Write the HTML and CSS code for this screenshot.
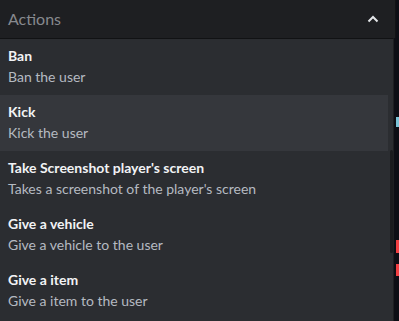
FILE: index.html
```html
<!DOCTYPE html>
<html>
<head>
<meta charset="utf-8">
<link rel="stylesheet" href="styles.css">
</head>
<body>
<div class="page">
  <div class="select">
    <div class="header">
      <span class="placeholder">Actions</span>
      <svg class="chevron" width="12" height="8" viewBox="0 0 12 8"><path d="M1.5 6.5 L6 2 L10.5 6.5" fill="none" stroke="#e3e5e8" stroke-width="2"/></svg>
    </div>
    <div class="menu">
      <div class="options">
        <div class="option"><div class="label">Ban</div><div class="desc">Ban the user</div></div>
        <div class="option hover"><div class="label">Kick</div><div class="desc">Kick the user</div></div>
        <div class="option"><div class="label">Take Screenshot player's screen</div><div class="desc">Takes a screenshot of the player's screen</div></div>
        <div class="option"><div class="label">Give a vehicle</div><div class="desc">Give a vehicle to the user</div></div>
        <div class="option"><div class="label">Give a item</div><div class="desc">Give a item to the user</div></div>
      </div>
      <div class="scrolltrack"><div class="thumb"></div></div>
    </div>
  </div>
  <div class="strip">
    <div class="mark cyan"></div>
    <div class="mark red first"></div>
    <div class="mark red second"></div>
  </div>
</div>
</body>
</html>
```
FILE: styles.css
```css
html, body {
  margin: 0;
  padding: 0;
  background: #0d0e15;
  height: 321px;
  overflow: hidden;
}
.page {
  display: flex;
  height: 321px;
  font-family: Lato, "Noto Sans", sans-serif;
}
.select {
  width: 396px;
  display: flex;
  flex-direction: column;
}
.header {
  height: 38px;
  background: #1e1f22;
  border-right: 1px solid #111214;
  display: flex;
  align-items: center;
  justify-content: space-between;
  padding: 0 16px 0 8px;
  box-sizing: border-box;
}
.placeholder {
  color: #87898e;
  font-size: 16px;
  margin-top: -2px;
}
.chevron {
  display: block;
  margin-top: -1px;
}
.menu {
  flex: 1;
  width: 394px;
  background: #2b2d31;
  border-top: 1px solid #111214;
  border-right: 1px solid #1e1f22;
  box-sizing: border-box;
  display: flex;
}
.options {
  width: 389px;
}
.option {
  height: 56px;
  box-sizing: border-box;
  padding: 8px 8px 0;
}
.option.hover {
  background: #35373c;
}
.label {
  color: #f2f3f5;
  font-size: 14px;
  font-weight: 700;
  line-height: 18px;
}
.desc {
  color: #b5bac1;
  font-size: 14px;
  line-height: 18px;
  margin-top: 3px;
}
.scrolltrack {
  flex: 1;
  padding: 111px 0 0 2px;
}
.thumb {
  width: 3px;
  height: 103px;
  background: #1a1b1e;
  border-radius: 2px;
}
.strip {
  flex: 1;
  display: flex;
  flex-direction: column;
  align-items: flex-end;
}
.mark {
  width: 3px;
}
.cyan {
  background: #7cc4d8;
  height: 10px;
  margin-top: 117px;
}
.red.first {
  background: #f23f42;
  height: 13px;
  margin-top: 113px;
}
.red.second {
  background: #f23f42;
  height: 12px;
  margin-top: 11px;
}
```
